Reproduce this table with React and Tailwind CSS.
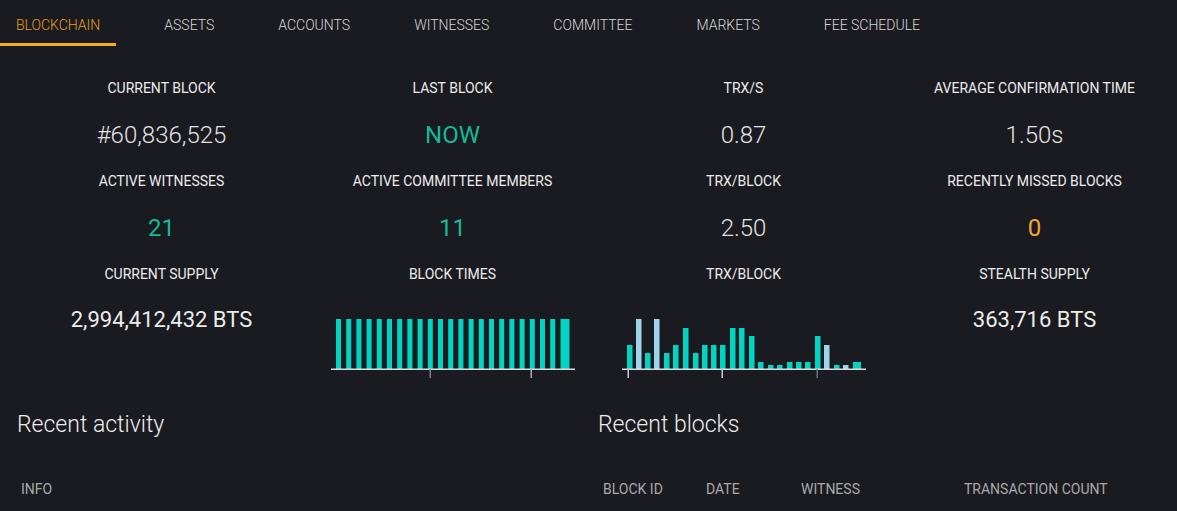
import React from "react";

const tabs = ["BLOCKCHAIN", "ASSETS", "ACCOUNTS", "WITNESSES", "COMMITTEE", "MARKETS", "FEE SCHEDULE"];

const TEAL = "#00d4c2";
const BLUE = "#9fd4ec";

// block times: all the same height
const blockBars = Array.from({ length: 23 }, (_, i) => ({
  x: i < 22 ? 5 + i * 10.2 : 229.5,
  w: i < 22 ? 5 : 9,
  h: 50,
  c: TEAL,
}));

// trx per block: [x offset, bar top in px above baseline, colour]
const trxBars = [
  [5, 24, TEAL], [14, 50, BLUE], [23, 16, TEAL], [32, 50, BLUE], [42, 16, TEAL],
  [51, 24, TEAL], [61, 41, TEAL], [71, 16, TEAL], [80, 24, TEAL], [89, 24, TEAL],
  [98, 24, TEAL], [108, 41, TEAL], [117, 41, TEAL], [127, 33, TEAL], [136, 7, TEAL],
  [146, 4, TEAL], [155, 4, TEAL], [165, 7, TEAL], [174, 7, TEAL], [183, 7, TEAL],
  [193, 33, TEAL], [202, 24, BLUE], [212, 4, TEAL], [221, 4, BLUE], [231, 7, TEAL],
].map(([x, h, c], i) => ({ x, w: i === 24 ? 8 : 5.5, h, c }));

function BarChart({ bars, ticks }) {
  return (
    <svg width="244" height="60" viewBox="0 0 244 60">
      {bars.map((b, i) => (
        <rect key={i} x={b.x} y={50 - b.h} width={b.w} height={b.h} fill={b.c} />
      ))}
      <rect x="0" y="49.5" width="244" height="1.5" fill="#d9dae2" />
      {ticks.map((t, i) => (
        <rect key={i} x={t.x} y="50" width="1.5" height="9" fill={t.c} />
      ))}
    </svg>
  );
}

function Stat({ label, children }) {
  return (
    <div className="flex flex-col items-center h-[93px]">
      <div className="h-5 leading-5 text-[14px] text-[#ececec]">{label}</div>
      {children}
    </div>
  );
}

function Value({ color = "text-[#e2e2e2]", weight = "font-light", children }) {
  return <div className={`mt-[21px] h-8 leading-8 text-[24px] ${weight} ${color}`}>{children}</div>;
}

export default function App() {
  return (
    <div
      className="min-h-screen w-[1177px] bg-[#1a1b20] overflow-hidden"
      style={{ fontFamily: "Roboto, 'Noto Sans', sans-serif" }}
    >
      {/* tabs */}
      <div className="flex gap-8 h-[46px]">
        {tabs.map((t, i) => (
          <div
            key={t}
            className={`px-4 pt-[15px] h-[46px] text-[14px] leading-5 font-light ${
              i === 0 ? "text-[#e89d1a] border-b-[3px] border-[#fbac12]" : "text-[#d6d6d6]"
            }`}
          >
            {t}
          </div>
        ))}
      </div>

      {/* stats */}
      <div className="grid grid-cols-[291px_291px_291px_291px] pl-[16px] mt-8">
        <Stat label="CURRENT BLOCK">
          <Value>#60,836,525</Value>
        </Stat>
        <Stat label="LAST BLOCK">
          <Value color="text-[#17b897]" weight="font-normal">NOW</Value>
        </Stat>
        <Stat label="TRX/S">
          <Value>0.87</Value>
        </Stat>
        <Stat label="AVERAGE CONFIRMATION TIME">
          <Value>1.50s</Value>
        </Stat>

        <Stat label="ACTIVE WITNESSES">
          <Value color="text-[#17b897]" weight="font-normal">21</Value>
        </Stat>
        <Stat label="ACTIVE COMMITTEE MEMBERS">
          <Value color="text-[#17b897]" weight="font-normal">11</Value>
        </Stat>
        <Stat label="TRX/BLOCK">
          <Value>2.50</Value>
        </Stat>
        <Stat label="RECENTLY MISSED BLOCKS">
          <Value color="text-[#f6a52a]" weight="font-normal">0</Value>
        </Stat>

        <Stat label="CURRENT SUPPLY">
          <div className="mt-[20px] h-8 leading-8 text-[22px] text-[#ececec]">2,994,412,432 BTS</div>
        </Stat>
        <Stat label="BLOCK TIMES">
          <div className="mt-[35px]">
            <BarChart bars={blockBars} ticks={[{ x: 98.5, c: "#7b7c88" }, { x: 199.5, c: "#a9aab4" }]} />
          </div>
        </Stat>
        <Stat label="TRX/BLOCK">
          <div className="mt-[35px]">
            <BarChart
              bars={trxBars}
              ticks={[
                { x: 5.5, c: "#c9cad4" },
                { x: 99.5, c: "#c9cad4" },
                { x: 194.5, c: "#6f7079" },
              ]}
            />
          </div>
        </Stat>
        <Stat label="STEALTH SUPPLY">
          <div className="mt-[20px] h-8 leading-8 text-[22px] text-[#ececec]">363,716 BTS</div>
        </Stat>
      </div>

      {/* recent */}
      <div className="flex mt-[52px]">
        <div className="w-[581px] pl-[17px]">
          <h2 className="text-[23px] leading-8 font-light text-[#ececec]">Recent activity</h2>
          <div className="mt-[38px] flex text-[14px] leading-5 text-[#a9a9a9]">
            <div className="pl-1">INFO</div>
          </div>
        </div>
        <div className="flex-1 pl-[17px]">
          <h2 className="text-[23px] leading-8 font-light text-[#ececec]">Recent blocks</h2>
          <div className="mt-[38px] flex text-[14px] leading-5 text-[#a9a9a9]">
            <div className="w-[103px] pl-[5px]">BLOCK ID</div>
            <div className="w-[95px] pl-[5px]">DATE</div>
            <div className="w-[163px] pl-[5px]">WITNESS</div>
            <div className="pl-[5px]">TRANSACTION COUNT</div>
          </div>
        </div>
      </div>
    </div>
  );
}
